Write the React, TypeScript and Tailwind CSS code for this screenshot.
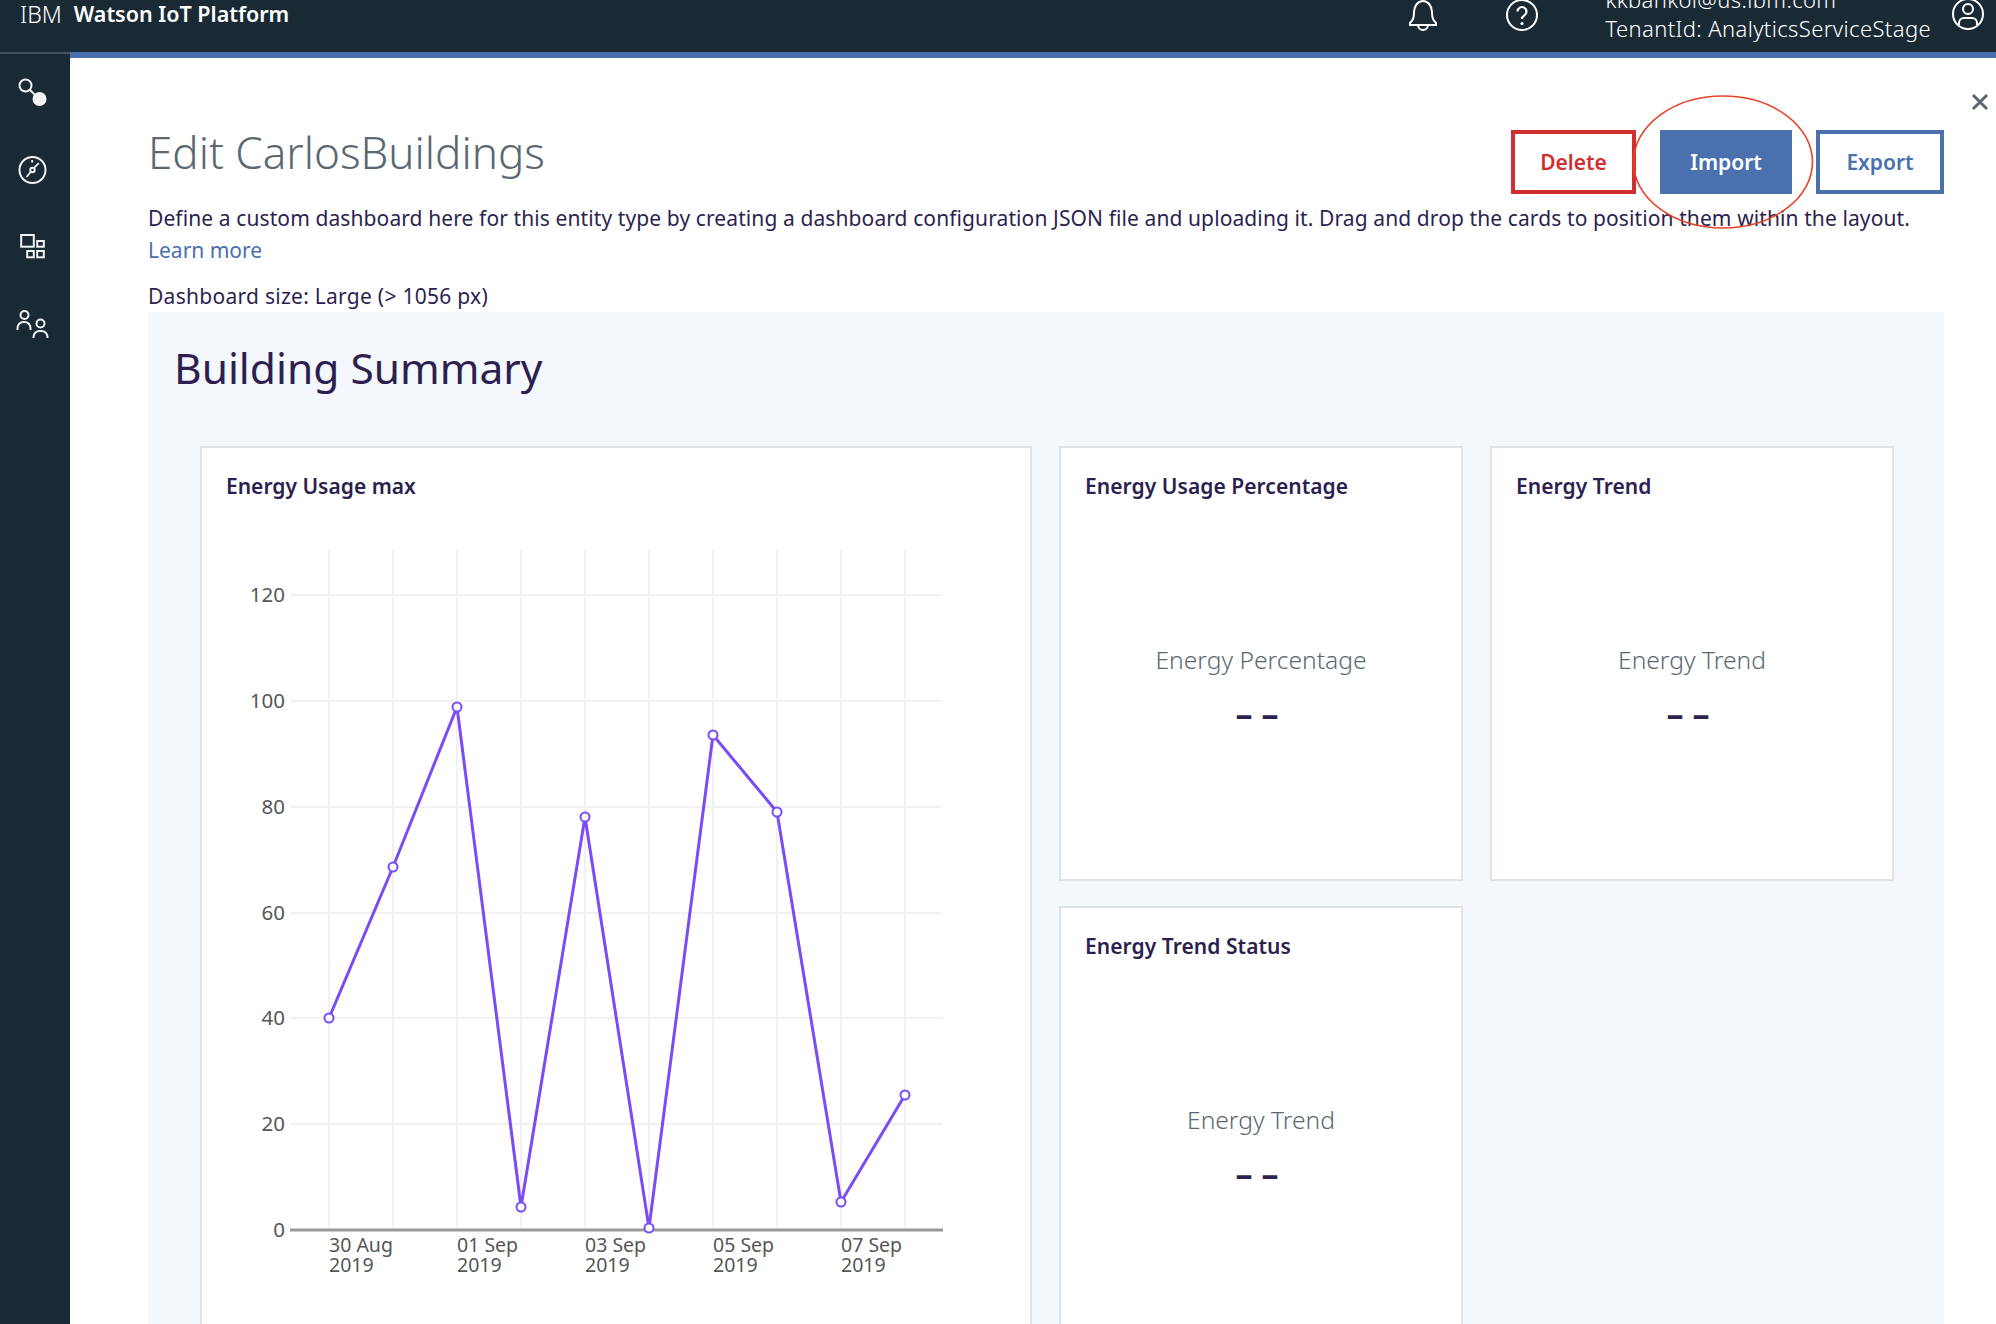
import React from 'react';

const points: [number, number][] = [
  [329, 1018], [393, 867], [457, 707], [521, 1207], [585, 817],
  [649, 1228], [713, 735], [777, 812], [841, 1202], [905, 1095],
];
const yTicks: [string, number][] = [
  ['120', 595], ['100', 701], ['80', 807], ['60', 913], ['40', 1018], ['20', 1124],
];
const xLabels: [string, number][] = [
  ['30 Aug', 329], ['01 Sep', 457], ['03 Sep', 585], ['05 Sep', 713], ['07 Sep', 841],
];

const SideIcons = () => (
  <div className="flex flex-col items-center pr-[7px] text-[#f3f3f3]">
    <svg width="32" height="32" viewBox="0 0 32 32" fill="none" stroke="currentColor" strokeWidth="2" className="mt-[21px]">
      <circle cx="9.5" cy="10.5" r="6" />
      <path d="M14 15l5 5" />
      <circle cx="23.5" cy="24" r="7" fill="currentColor" stroke="none" />
    </svg>
    <svg width="32" height="32" viewBox="0 0 32 32" fill="none" stroke="currentColor" strokeWidth="2" className="mt-[46px]">
      <circle cx="16.5" cy="17" r="13" />
      <path d="M22.8 10l-4.5 4.7M14.7 19l-4.2 5" strokeWidth="1.8" />
      <circle cx="16.5" cy="17" r="2.2" />
      <path d="M16.2 7v2.5" />
    </svg>
    <svg width="32" height="32" viewBox="0 0 32 32" fill="none" stroke="currentColor" strokeWidth="2" className="mt-[46px]">
      <rect x="5.2" y="4" width="12.6" height="11.7" />
      <rect x="21.2" y="10" width="6.6" height="5.7" />
      <rect x="11.2" y="20" width="6.6" height="6.3" />
      <rect x="21.2" y="20" width="6.6" height="6.3" />
    </svg>
    <svg width="34" height="32" viewBox="0 0 34 32" fill="none" stroke="currentColor" strokeWidth="2" className="mt-[46px]">
      <circle cx="9.5" cy="6" r="4" />
      <path d="M2.5 21v-2a6 6 0 0 1 6-6h1a6 6 0 0 1 6 6v2" />
      <circle cx="25.5" cy="14.5" r="4" />
      <path d="M18.5 29v-1a6 6 0 0 1 6-6h2a6 6 0 0 1 6 6v1" />
    </svg>
  </div>
);

const SmallCard = ({ title, label }: { title: string; label: string }) => (
  <div className="bg-white border-2 border-[#dfe3e6] h-[435px]">
    <div className="pl-[24px] pt-[24px] text-[21px] leading-[28px] font-semibold tracking-[0.05px] text-[#2d1f4f]">{title}</div>
    <div className="flex flex-col items-center">
      <div className="mt-[144px] text-[24.6px] leading-[32px] font-light text-[#5a6872]">{label}</div>
      <div className="mt-[19px] pr-[8px] text-[34px] leading-[36px] font-bold text-[#2d1f4f]">– –</div>
    </div>
  </div>
);

export default function App() {
  return (
    <div className="w-[1996px] h-[1324px] overflow-hidden flex flex-col bg-white font-['Noto_Sans',sans-serif]">
      <header className="h-[52px] shrink-0 bg-[#1a2a35] flex items-start text-white overflow-hidden">
        <span className="ml-[20px] text-[23px] leading-[28px] font-light">IBM</span>
        <span className="ml-[12px] text-[21.5px] leading-[28px] font-semibold">Watson IoT Platform</span>
        <div className="ml-auto flex items-start">
          <svg width="34" height="34" viewBox="0 0 34 34" fill="none" stroke="currentColor" strokeWidth="2" className="mt-[-2px]">
            <path d="M4 25c3-3 4-5 4-11 0-6 4-11 9-11s9 5 9 11c0 6 1 8 4 11v2H4z" />
            <path d="M12 27a5 5 0 0 0 10 0" />
          </svg>
          <svg width="34" height="34" viewBox="0 0 34 34" fill="none" stroke="currentColor" strokeWidth="2" className="ml-[65px] mt-[-1px]">
            <circle cx="17" cy="16" r="15" />
            <path d="M12.5 12.5a4.5 4.5 0 1 1 6.8 3.9c-1.6 1-2.3 1.8-2.3 3.6" strokeWidth="2.2" />
            <circle cx="17" cy="24.5" r="1.6" fill="currentColor" stroke="none" />
          </svg>
          <div className="ml-[66px] mt-[-15px] text-[22px] leading-[29px] tracking-[0.39px] font-light whitespace-nowrap">
            <div>kkbankol@us.ibm.com</div>
            <div>TenantId: AnalyticsServiceStage</div>
          </div>
          <svg width="34" height="34" viewBox="0 0 34 34" fill="none" stroke="currentColor" strokeWidth="2" className="ml-[20px] mr-[11px] mt-[-2px]">
            <circle cx="17" cy="16" r="15" />
            <circle cx="17" cy="11" r="5" />
            <path d="M8 27v-2a5 5 0 0 1 5-5h8a5 5 0 0 1 5 5v2" />
          </svg>
        </div>
      </header>

      <div className="flex flex-1 min-h-0">
        <aside className="w-[70px] shrink-0 bg-[#1a2a35] border-t-2 border-[#47525a]">
          <SideIcons />
        </aside>

        <main className="relative flex-1 min-w-0 flex flex-col border-t-[6px] border-[#4a70ad] pl-[78px] pr-[52px] pt-[72px] overflow-hidden">
          <svg width="182" height="136" viewBox="0 0 182 136" fill="none" className="absolute left-[1562px] top-[36px] pointer-events-none z-10">
            <ellipse cx="91" cy="68" rx="89.5" ry="66" stroke="#e8432a" strokeWidth="1.6" />
          </svg>
          <svg width="18" height="18" viewBox="0 0 18 18" className="absolute left-[1901px] top-[35px] text-[#5a6872]" stroke="currentColor" strokeWidth="3">
            <path d="M2 2l14 14M16 2L2 16" />
          </svg>

          <div className="flex items-start justify-between">
            <h1 className="mt-[-8px] text-[44px] leading-[60px] font-light text-[#5a6872]">Edit CarlosBuildings</h1>
            <div className="flex gap-[24px]">
              <button className="w-[125px] h-[64px] pt-[2px] border-[4px] border-[#d12f2f] text-[#d12f2f] text-[21px] font-semibold">Delete</button>
              <button className="w-[132px] h-[64px] pt-[2px] bg-[#4a70ad] text-white text-[21px] font-semibold">Import</button>
              <button className="w-[128px] h-[64px] pt-[2px] border-[4px] border-[#4a70ad] text-[#4a70ad] text-[21px] font-semibold">Export</button>
            </div>
          </div>

          <p className="mt-[8px] text-[21px] leading-[32px] tracking-[0.1px] text-[#2d1f4f] whitespace-nowrap">
            Define a custom dashboard here for this entity type by creating a dashboard configuration JSON file and uploading it. Drag and drop the cards to position them within the layout.
          </p>
          <a className="block text-[21px] leading-[32px] text-[#4a70ad]">Learn more</a>
          <p className="mt-[14px] text-[21px] leading-[32px] tracking-[0.27px] text-[#2d1f4f]">Dashboard size: Large (&gt; 1056 px)</p>

          <section className="bg-[#f4f7fb] flex-1 min-h-0 pt-[26px] pl-[26px]">
            <h2 className="text-[42.5px] leading-[60px] font-normal text-[#2d1f4f]">Building Summary</h2>
            <div className="mt-[48px] ml-[26px] grid grid-cols-[832px_404px_404px] gap-x-[27px] gap-y-[25px]">
              <div className="row-span-2 bg-white border-2 border-[#dfe3e6] h-[895px]">
                <div className="pl-[24px] pt-[24px] text-[21px] leading-[28px] font-semibold text-[#2d1f4f]">Energy Usage max</div>
                <svg width="828" height="824" viewBox="202 500 828 824" fill="none" className="block">
                  {yTicks.map(([, y]) => (
                    <path key={y} d={`M290 ${y}H943`} stroke="#f0f1f3" strokeWidth="2" />
                  ))}
                  {points.map(([x]) => (
                    <path key={x} d={`M${x} 550V1230`} stroke="#f0f1f3" strokeWidth="2" />
                  ))}
                  <path d="M290 1230H943" stroke="#999999" strokeWidth="3" />
                  {[...yTicks, ['0', 1230] as [string, number]].map(([t, y]) => (
                    <text key={t} x="285" y={y + 7} textAnchor="end" fontSize="20.5" fill="#565656">{t}</text>
                  ))}
                  {xLabels.map(([t, x]) => (
                    <text key={t} x={x} fontSize="19.5" fill="#565656">
                      <tspan x={x} y="1252">{t}</tspan>
                      <tspan x={x} y="1272">2019</tspan>
                    </text>
                  ))}
                  <polyline points={points.map((p) => p.join(',')).join(' ')} stroke="#7a4cf5" strokeWidth="3" strokeLinejoin="round" />
                  {points.map(([x, y]) => (
                    <circle key={x} cx={x} cy={y} r="4.5" fill="#fff" stroke="#7a4cf5" strokeWidth="2" />
                  ))}
                </svg>
              </div>
              <SmallCard title="Energy Usage Percentage" label="Energy Percentage" />
              <SmallCard title="Energy Trend" label="Energy Trend" />
              <SmallCard title="Energy Trend Status" label="Energy Trend" />
            </div>
          </section>
        </main>
      </div>
    </div>
  );
}
